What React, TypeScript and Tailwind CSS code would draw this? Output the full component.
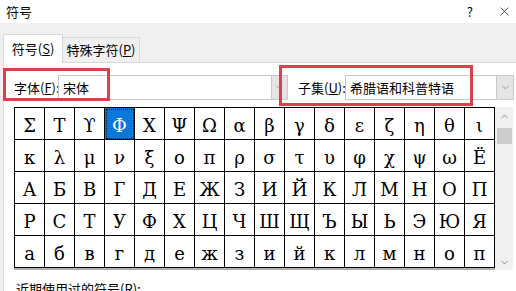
import { ChevronDown, ChevronUp, X } from "lucide-react";

const rows = [
  "ΣΤϒΦΧΨΩαβγδεζηθι",
  "κλμνξοπρστυφχψωЁ",
  "АБВГДЕЖЗИЙКЛМНОП",
  "РСТУФХЦЧШЩЪЫЬЭЮЯ",
  "абвгдежзийклмноп",
];

function DropButton({ w }: { w: string }) {
  return (
    <div className={`${w} h-full flex items-center justify-center bg-[#e5e5e5] border border-[#c9c9c9]`}>
      <ChevronDown size={11} strokeWidth={1.4} className="text-[#707070]" />
    </div>
  );
}

export default function App() {
  return (
    <div className="relative w-[516px] h-[291px] overflow-hidden bg-[#f0f0f0] text-black font-['Noto_Sans_CJK_SC',sans-serif]">
      {/* title bar */}
      <div className="h-[23px] bg-white flex items-center">
        <span className="pl-[6px] text-[13px] leading-none">符号</span>
        <span className="ml-auto mr-[24px] text-[13px] leading-none">?</span>
        <X size={15} strokeWidth={1} className="mr-[4px] text-black" />
      </div>

      {/* tabs */}
      <div className="mt-[11px] pl-[3px] flex items-end h-[28px]">
        <div className="relative z-10 -mb-px h-[29px] w-[60px] bg-white border border-b-0 border-[#d9d9d9] flex items-center justify-center text-[13px]">
          <span>
            符号(<span className="underline">S</span>)
          </span>
        </div>
        <div className="h-[25px] w-[77px] bg-[#f0f0f0] border border-l-0 border-b-0 border-[#d9d9d9] flex items-center justify-center text-[13px]">
          <span>
            特殊字符(<span className="underline">P</span>)
          </span>
        </div>
      </div>

      {/* panel */}
      <div className="ml-[3px] h-[300px] bg-white border-l border-t border-[#d9d9d9] pl-[10px] pt-[12px]">
        <div className="flex items-center h-[25px] text-[13px]">
          <span className="w-[44px] whitespace-nowrap">
            字体(<span className="underline">F</span>):
          </span>
          <div className="w-[213px] h-full border border-r-0 border-[#c8c8c8] flex items-center pl-[4px]">宋体</div>
          <DropButton w="w-[17px]" />
          <span className="ml-[10px] w-[47px] whitespace-nowrap">
            子集(<span className="underline">U</span>):
          </span>
          <div className="w-[151px] h-full border border-r-0 border-[#c8c8c8] flex items-center pl-[4px] whitespace-nowrap">希腊语和科普特语</div>
          <DropButton w="w-[18px]" />
        </div>

        <div className="mt-[7px] flex">
          <div className="border-b-2 border-[#b0b0b0]">
            <div className="grid grid-cols-[repeat(16,30px)] grid-rows-[repeat(5,32px)] border-l border-t border-black font-[family-name:'DejaVu_Serif',serif] text-[18px]">
              {rows.map((r, ri) =>
                Array.from(r).map((ch, ci) => {
                  const sel = ri === 0 && ci === 3;
                  return (
                    <div
                      key={`${ri}-${ci}`}
                      className={`border-r border-b border-black text-center pt-[5px] leading-[26px] ${
                        sel ? "bg-[#0a78d8] text-white outline-1 outline-dotted -outline-offset-2 outline-[#1a1a1a]" : ""
                      }`}
                    >
                      {ch}
                    </div>
                  );
                })
              )}
            </div>
          </div>
          <div className="w-[18px] h-[163px] bg-[#f0f0f0] flex flex-col items-center">
            <ChevronUp size={11} strokeWidth={1.4} className="mt-[4px] text-[#606060]" />
            <div className="mt-[6px] w-[15px] h-[16px] bg-[#cdcdcd]" />
            <div className="flex-1" />
            <ChevronDown size={11} strokeWidth={1.6} className="mb-[2px] text-[#606060]" />
          </div>
        </div>

        <div className="mt-[10px] pl-[2px] text-[13px] leading-[17px]">
          近期使用过的符号(<span className="underline">R</span>):
        </div>
      </div>

      {/* annotation boxes */}
      <div className="absolute left-[3px] top-[68px] w-[107px] h-[33px] border-[3px] border-[#d8434a]" />
      <div className="absolute left-[279px] top-[65px] w-[194px] h-[41px] border-[3px] border-[#d8434a]" />
    </div>
  );
}
